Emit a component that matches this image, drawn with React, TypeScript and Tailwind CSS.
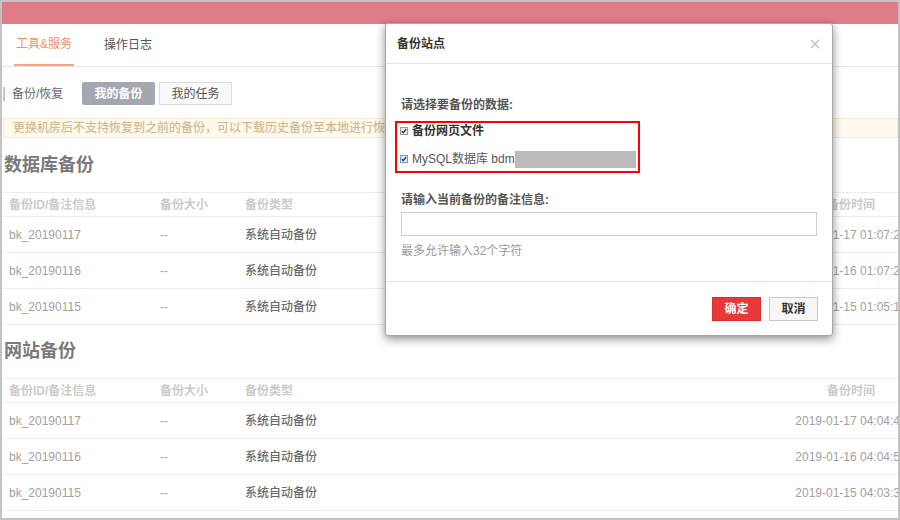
import React from "react";

const rowsDb = [
  { id: "bk_20190117", time: "2019-01-17 01:07:25" },
  { id: "bk_20190116", time: "2019-01-16 01:07:23" },
  { id: "bk_20190115", time: "2019-01-15 01:05:18" },
];
const rowsSite = [
  { id: "bk_20190117", time: "2019-01-17 04:04:46" },
  { id: "bk_20190116", time: "2019-01-16 04:04:52" },
  { id: "bk_20190115", time: "2019-01-15 04:03:37" },
];

function Table({ rows }: { rows: { id: string; time: string }[] }) {
  return (
    <div className="ml-px w-[918px] border-t border-[#ececec]">
      <div className="grid grid-cols-[151px_85px_1fr_140px] pl-[6px] h-[24px] items-center border-b border-[#ececec] text-[12px] font-bold text-[#cbcbcb]">
        <div>备份ID/备注信息</div>
        <div>备份大小</div>
        <div>备份类型</div>
        <div className="text-center">备份时间</div>
      </div>
      {rows.map((r) => (
        <div
          key={r.id}
          className="grid grid-cols-[151px_85px_1fr_140px] pl-[6px] h-[36px] items-center border-b border-[#ececec] text-[12px]"
        >
          <div className="text-[#a3a0a3]">{r.id}</div>
          <div className="text-[#aaaaaa]">--</div>
          <div className="text-[#6b6b6b] font-medium">系统自动备份</div>
          <div className="text-center text-[#a3a0a3] whitespace-nowrap">{r.time}</div>
        </div>
      ))}
    </div>
  );
}

function Check({ blue }: { blue?: boolean }) {
  return (
    <span
      className={
        "inline-flex items-center justify-center w-[8px] h-[8px] border shrink-0 " +
        (blue ? "border-[#6a9bd6] bg-[#dfe9f6]" : "border-[#9a9a9a] bg-[#ececec]")
      }
    >
      <svg width="6" height="6" viewBox="0 0 6 6">
        <path d="M0.8 3.1 L2.3 4.6 L5.2 1.2" fill="none" stroke="#222" strokeWidth="1.3" />
      </svg>
    </span>
  );
}

export default function App() {
  return (
    <div
      className="relative w-[900px] h-[520px] border-2 border-[#c3c3c3] bg-white overflow-hidden"
      style={{ fontFamily: '"Liberation Sans", "Noto Sans CJK SC", sans-serif' }}
    >
      <div className="h-[22px] bg-[#e07c88]" />
      <div className="h-[43px] border-b border-[#e6e6e6] flex pl-[12px] gap-[30px] text-[12px]">
        <div className="relative flex items-center px-[2px] text-[#f29166] border-b-2 border-[#f7a27e]">
          工具&amp;服务
        </div>
        <div className="flex items-center text-[#555]">操作日志</div>
      </div>

      <div className="mt-[15px] flex items-center h-[23px] text-[12px]">
        <div className="ml-px w-[2px] h-[14px] bg-[#a9cdea]" />
        <div className="ml-[7px] w-[70px] text-[#666]">备份/恢复</div>
        <div className="w-[73px] h-[23px] flex items-center justify-center bg-[#a3a7b0] rounded-[2px] text-white font-bold">
          我的备份
        </div>
        <div className="ml-[4px] w-[73px] h-[23px] flex items-center justify-center bg-[#f9f9f9] border border-[#dcdcdc] text-[#555]">
          我的任务
        </div>
      </div>

      <div className="mt-[13px] ml-px h-[20px] flex items-center pl-[9px] bg-[#fdf9ec] border border-[#f6ecd0] text-[12px] text-[#d5bb94] font-medium whitespace-nowrap">
        更换机房后不支持恢复到之前的备份，可以下载历史备份至本地进行恢复。
      </div>

      <div className="h-[54px] flex items-center pl-[2px] text-[18px] font-bold text-[#7a7a7a]">数据库备份</div>
      <Table rows={rowsDb} />

      <div className="h-[53px] flex items-center pl-[2px] text-[18px] font-bold text-[#7a7a7a]">网站备份</div>
      <Table rows={rowsSite} />

      {/* Modal */}
      <div className="absolute left-[383px] top-[21px] w-[448px] h-[313px] bg-white border border-[#a8a8a8] rounded-[3px] shadow-[0_3px_10px_rgba(0,0,0,0.45)] flex flex-col">
        <div className="h-[40px] shrink-0 border-b border-[#e3e3e3] flex items-center justify-between pl-[11px] pr-[12px]">
          <div className="text-[12px] font-bold text-[#333]">备份站点</div>
          <svg width="10" height="10" viewBox="0 0 10 10">
            <path d="M1 1 L9 9 M9 1 L1 9" stroke="#c4c4c4" strokeWidth="1.6" />
          </svg>
        </div>
        <div className="flex-1 px-[15px] pt-[31px] text-[12px]">
          <div className="h-[20px] leading-[20px] font-bold text-[#555]">请选择要备份的数据:</div>
          <div className="mt-[6px] -ml-[6px] w-[245px] border-2 border-[#ff0000] pl-[3px] pt-0 pb-[3px]">
            <div className="h-[16px] flex items-center gap-[4px]">
              <Check />
              <span className="font-bold text-[#333] whitespace-nowrap">备份网页文件</span>
            </div>
            <div className="mt-[11px] h-[18px] flex items-center gap-[4px]">
              <Check blue />
              <span className="text-[#555] whitespace-nowrap shrink-0">MySQL数据库 bdm</span>
              <span className="w-[121px] h-[17px] bg-[#bbbbbb] -ml-[4px] shrink-0" />
            </div>
          </div>
          <div className="mt-[17px] h-[20px] leading-[20px] font-bold text-[#555]">请输入当前备份的备注信息:</div>
          <div className="mt-[2px] h-[24px] border border-[#cfcfcf]" />
          <div className="mt-[5px] h-[20px] leading-[20px] text-[#999]">最多允许输入32个字符</div>
        </div>
        <div className="h-[54px] shrink-0 border-t border-[#e3e3e3] flex items-center justify-end gap-[8px] pr-[14px]">
          <div className="w-[49px] h-[24px] flex items-center justify-center bg-[#e93838] border border-[#d63030] text-white text-[12px] font-bold">
            确定
          </div>
          <div className="w-[49px] h-[24px] flex items-center justify-center bg-[#f6f6f6] border border-[#c8c8c8] text-[#333] text-[12px] font-bold">
            取消
          </div>
        </div>
      </div>
    </div>
  );
}
